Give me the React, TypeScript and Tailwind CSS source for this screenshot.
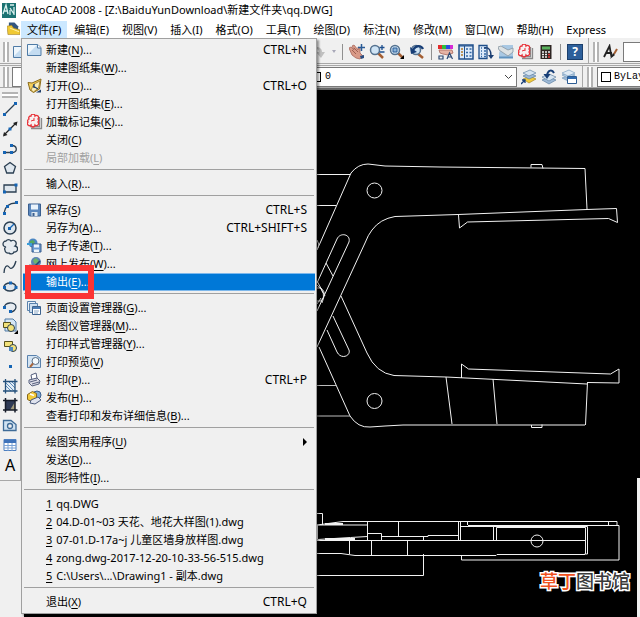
import type { ReactNode } from "react";

interface MenuEntry {
  label: string;
  hotkey?: string;
  tail?: string;
  shortcut?: string;
  icon?: ReactNode;
  disabled?: boolean;
  active?: boolean;
  submenu?: boolean;
}

function Icon({ children }: { children: ReactNode }) {
  return (
    <svg width="16" height="16" viewBox="0 0 16 16" fill="none" className="shrink-0">
      {children}
    </svg>
  );
}

const PageIcon = (
  <Icon>
    <path d="M.5 2.500H10.500l3.500 3v8H.5z" fill="#c4dcf1" stroke="#4f7ba6" />
    <path d="M10.500 2.500v3.500h3.500" fill="#fff" stroke="#4f7ba6" />
    <path d="M1 3h9L1 12z" fill="#eef6fc" />
  </Icon>
);

const OpenIcon = (
  <Icon>
    <path d="M1 4.500l4 .5 9-4-1.500 10-6 3.500L3 12z" fill="#f3cf5b" stroke="#8b6b1c" />
    <path d="M4 12l3-6 6-3-1.500 7-5 4z" fill="#fdf0b8" stroke="#9b7a25" strokeWidth="0.800" />
    <path d="M6 8l5 3M7 6v4" stroke="#1f3f6b" strokeWidth="1.300" />
    <path d="M9 14.500l5-3v3z" fill="#1f3f6b" />
  </Icon>
);

const MarkupIcon = (
  <Icon>
    <path d="M4 14.500h10.500V4M3 12.500h9.500V3" stroke="#8a8a8a" strokeWidth="1.300" />
    <path d="M1 1.500h10.500v10H1z" fill="#f8f0f0" />
    <path d="M2 5a2 2 0 0 1 2-3 2 2 0 0 1 4 0 2 2 0 0 1 3 3 2 2 0 0 1 0 3 2 2 0 0 1-3 3 2 2 0 0 1-4 0 2 2 0 0 1-3-3 2 2 0 0 1 1-3z" stroke="#e8333a" strokeWidth="1.300" />
    <path d="M4 7l3-1M7 4v3" stroke="#e8333a" />
  </Icon>
);

const SaveIcon = (
  <Icon>
    <path d="M1.500 2h12v12h-11l-1-1z" fill="#5b87bd" stroke="#3a5f8f" />
    <path d="M4 2.500h7v5H4z" fill="#eaf3fb" />
    <path d="M4.500 10h6v4h-6z" fill="#dfe8f0" />
    <path d="M5.500 11h2v3h-2z" fill="#3a5f8f" />
  </Icon>
);

const TransmitIcon = (
  <Icon>
    <circle cx="6" cy="5" r="4.500" fill="#4b86c2" />
    <path d="M3 3l3-1 2 2-2 3-3-1z" fill="#55a860" />
    <path d="M5 6h9v8H5z" fill="#6c9bd0" stroke="#3a5f8f" />
    <path d="M7 6.500h5v3H7zM7 11.500h5V14H7z" fill="#eef5fb" />
    <path d="M0 6h4v2" stroke="#3b9ed8" strokeWidth="2" />
  </Icon>
);

const WebIcon = (
  <Icon>
    <circle cx="9" cy="6" r="5" fill="#5b83b5" />
    <path d="M6 4l3-2 3 3-3 3-2-1z" fill="#6db36d" />
    <path d="M2 9h8v5H2z" fill="#dce5ef" stroke="#6a7b91" />
    <path d="M3 10l3 2 7-7" stroke="#27466f" strokeWidth="1.500" />
  </Icon>
);

const PageSetupIcon = (
  <Icon>
    <path d="M.5 1.500h8v9h-8z" fill="#eaf2fa" stroke="#5a82ad" />
    <path d="M2.500 3.500h8v9h-8z" fill="#cddff0" stroke="#5a82ad" />
    <path d="M5.500 6.500h8v8h-8z" fill="#fff" stroke="#3d638f" />
    <path d="M6 7h7v2H6z" fill="#4c7db5" />
    <path d="M7 11h5M7 13h4" stroke="#8aa7c5" />
  </Icon>
);

const PreviewIcon = (
  <Icon>
    <path d="M.5 1.500h9l4 3v9H.5z" fill="#d3e4f3" stroke="#5a82ad" />
    <circle cx="8.500" cy="7" r="3.500" fill="#f5fafd" stroke="#5a6f86" />
    <path d="M6 9.500L3 13" stroke="#a9663b" strokeWidth="2" />
  </Icon>
);

const PrintIcon = (
  <Icon>
    <path d="M4 3l5-2 1 5-5 2z" fill="#fff" stroke="#56607e" />
    <path d="M2 8l8-2 3 3-1 3-7 2-3-3z" fill="#dcdce6" stroke="#56607e" />
    <path d="M3 10l7-2M5 12l7-2" stroke="#56607e" />
  </Icon>
);

const PublishIcon = (
  <Icon>
    <circle cx="10" cy="5" r="4" fill="#7da9d4" stroke="#3a5f8f" />
    <path d="M.5 4.500l5-3 4 2v5l-5 3-4-2z" fill="#f2ca3c" stroke="#86671c" />
    <path d="M4 10l7-3 3 3-6 4-5-1z" fill="#dfe3ee" stroke="#4a5a7c" />
    <path d="M3 4l4 1.500" stroke="#fff" strokeWidth="1.500" />
  </Icon>
);

const fileMenu: MenuEntry[][] = [
  [
    { label: "新建", hotkey: "N", tail: "...", shortcut: "CTRL+N", icon: PageIcon },
    { label: "新建图纸集", hotkey: "W", tail: "..." },
    { label: "打开", hotkey: "O", tail: "...", shortcut: "CTRL+O", icon: OpenIcon },
    { label: "打开图纸集", hotkey: "E", tail: "..." },
    { label: "加载标记集", hotkey: "K", tail: "...", icon: MarkupIcon },
    { label: "关闭", hotkey: "C" },
    { label: "局部加载", hotkey: "L", disabled: true },
  ],
  [{ label: "输入", hotkey: "R", tail: "..." }],
  [
    { label: "保存", hotkey: "S", shortcut: "CTRL+S", icon: SaveIcon },
    { label: "另存为", hotkey: "A", tail: "...", shortcut: "CTRL+SHIFT+S" },
    { label: "电子传递", hotkey: "T", tail: "...", icon: TransmitIcon },
    { label: "网上发布", hotkey: "W", tail: "...", icon: WebIcon },
    { label: "输出", hotkey: "E", tail: "...", active: true },
  ],
  [
    { label: "页面设置管理器", hotkey: "G", tail: "...", icon: PageSetupIcon },
    { label: "绘图仪管理器", hotkey: "M", tail: "..." },
    { label: "打印样式管理器", hotkey: "Y", tail: "..." },
    { label: "打印预览", hotkey: "V", icon: PreviewIcon },
    { label: "打印", hotkey: "P", tail: "...", shortcut: "CTRL+P", icon: PrintIcon },
    { label: "发布", hotkey: "H", tail: "...", icon: PublishIcon },
    { label: "查看打印和发布详细信息", hotkey: "B", tail: "..." },
  ],
  [
    { label: "绘图实用程序", hotkey: "U", submenu: true },
    { label: "发送", hotkey: "D", tail: "..." },
    { label: "图形特性", hotkey: "I", tail: "..." },
  ],
];

const recentFiles = [
  "qq.DWG",
  "04.D-01~03 天花、地花大样图(1).dwg",
  "07-01.D-17a~j 儿童区墙身放样图.dwg",
  "zong.dwg-2017-12-20-10-33-56-515.dwg",
  "C:\\Users\\...\\Drawing1 - 副本.dwg",
];

const menuBar = [
  "文件(F)",
  "编辑(E)",
  "视图(V)",
  "插入(I)",
  "格式(O)",
  "工具(T)",
  "绘图(D)",
  "标注(N)",
  "修改(M)",
  "窗口(W)",
  "帮助(H)",
  "Express",
];

function MenuItem({ item }: { item: MenuEntry }) {
  let color = "text-black";
  if (item.disabled) color = "text-[#a0a0a0]";
  if (item.active) color = "border-y border-[#7db8ec] bg-[#0078d7] text-white";

  return (
    <li className="relative">
      <button
        disabled={item.disabled}
        className={`flex h-[18px] w-full items-center pr-2 pl-1 text-left ${color}`}
      >
        <span className="flex w-[19px] shrink-0">{item.icon}</span>
        <span className="flex-1 whitespace-nowrap">
          {item.label}({<u className="underline-offset-2">{item.hotkey}</u>}){item.tail}
        </span>
        {item.shortcut && <span className="text-xs">{item.shortcut}</span>}
        {item.submenu && (
          <svg width="4" height="8" viewBox="0 0 4 8">
            <path d="M0 0l4 4-4 4z" fill="#000" />
          </svg>
        )}
      </button>
      {item.active && (
        <div className="pointer-events-none absolute -top-2 left-0.5 z-10 h-[34px] w-[69px] border-6 border-[#fb3434]" />
      )}
    </li>
  );
}

function Divider() {
  return (
    <li className="h-2 px-px pt-0.5">
      <div className="h-px bg-[#a0a0a0]" />
    </li>
  );
}

function FileMenu() {
  return (
    <ul className="absolute top-[38px] left-[21px] z-20 w-[296px] border border-[#a0a0a0] bg-[#f0f0f0] px-px py-0.5 shadow-[2px_2px_2px_rgba(0,0,0,0.4)]">
      {fileMenu.map((group, i) => (
        <li key={i}>
          <ul>
            {group.map(item => (
              <MenuItem key={item.label} item={item} />
            ))}
            <Divider />
          </ul>
        </li>
      ))}
      {recentFiles.map((name, i) => (
        <li key={name}>
          <button className="flex h-[18px] w-full items-center gap-1 pl-[23px] whitespace-nowrap">
            <u className="underline-offset-2">{i + 1}</u>
            <span>{name}</span>
          </button>
        </li>
      ))}
      <Divider />
      <MenuItem item={{ label: "退出", hotkey: "X", shortcut: "CTRL+Q" }} />
    </ul>
  );
}

// Standard toolbar

const zoomLens = (
  <>
    <path d="M9 9l5 5" stroke="#a35e32" strokeWidth="2.500" />
    <circle cx="6" cy="6" r="4.500" fill="#cfe4f5" stroke="#55728f" strokeWidth="1.500" />
  </>
);

const viewTools: { name: string; icon: ReactNode }[] = [
  {
    name: "Pan",
    icon: (
      <Icon>
        <path d="M0 4l2-1 3 3-2-4 2-1 4 5 0-3 2 1 0 5 3 3-3 3-4-1-4-3z" fill="#d99a88" stroke="#a8675a" strokeWidth="0.800" />
        <path d="M3 6l4 4M5 4l4 4" stroke="#8d5143" strokeWidth="0.800" />
        <path d="M12.500 0v7M9 3.500h7" stroke="#2a5b96" strokeWidth="1.500" />
        <path d="M11 12l4-1v3l-3 1z" fill="#2a4c80" />
      </Icon>
    ),
  },
  {
    name: "Zoom Realtime",
    icon: (
      <Icon>
        {zoomLens}
        <path d="M13 1v5M10.500 3.500h5M10.500 8h5" stroke="#1d4f8f" strokeWidth="1.300" />
      </Icon>
    ),
  },
  {
    name: "Zoom Window",
    icon: (
      <Icon>
        {zoomLens}
        <path d="M4 4h4v4H4z" fill="#8ab4da" stroke="#2f5f98" />
        <path d="M15 11v4h-4z" fill="#000" />
      </Icon>
    ),
  },
  {
    name: "Zoom Previous",
    icon: (
      <Icon>
        <path d="M8 9l6 5" stroke="#a35e32" strokeWidth="2.500" />
        <circle cx="7" cy="6" r="4.500" fill="#cfe4f5" stroke="#55728f" strokeWidth="1.500" />
        <path d="M14 5C12 1 7 1 4 6" stroke="#173e77" strokeWidth="2.300" />
        <path d="M1 3l1 7 6-2z" fill="#173e77" />
      </Icon>
    ),
  },
];

const paletteTools: { name: string; icon: ReactNode }[] = [
  {
    name: "Properties",
    icon: (
      <Icon>
        <path d="M0 1h4v4H0z" fill="#e22b2b" />
        <path d="M4 1h4v4H4z" fill="#2fbf3a" />
        <path d="M8 1h4v4H8z" fill="#2b4be2" />
        <path d="M12 1h3v4h-3z" fill="#d62bd6" />
        <path d="M1 6l6 0 7 0 1 3-5 2-5-1-3-1z" fill="#e5b3a4" stroke="#a8675a" strokeWidth="0.800" />
        <path d="M1 12h4v3H1zM9 15l2.500-6 3 6M10 13h4" stroke="#2c4a75" strokeWidth="1.200" />
      </Icon>
    ),
  },
  {
    name: "DesignCenter",
    icon: (
      <Icon>
        <path d="M1 1h14v14H1z" fill="#dceafa" stroke="#1f4f8a" strokeWidth="1.500" />
        <path d="M1 2h14M6.500 2v13" stroke="#1f4f8a" />
        <path d="M3 5h2M3 8h2M3 11h2" stroke="#b37b28" strokeWidth="1.500" />
        <path d="M8 5h2M11.500 5h2M8 8.500h2M11.500 8.500h2M8 12h2M11.500 12h2" stroke="#3469a5" strokeWidth="1.500" />
      </Icon>
    ),
  },
  {
    name: "Tool Palettes",
    icon: (
      <Icon>
        <path d="M1 1.500h8v13H1z" fill="#dceafa" stroke="#1f4f8a" strokeWidth="1.300" />
        <path d="M3 4h1M6 4h2M3 7h1M6 7h2M3 10h1M6 10h2M3 12.500h1M6 12.500h2" stroke="#3469a5" strokeWidth="1.500" />
        <path d="M6 4c5-1 7 2 7 8" stroke="#1c3f73" strokeWidth="1.500" />
        <path d="M10 11h6l-3 4z" fill="#1c3f73" />
      </Icon>
    ),
  },
  {
    name: "Sheet Set",
    icon: (
      <Icon>
        <path d="M4 1h11v13H1V9z" fill="#a9c8e3" />
        <path d="M0 3l3-1 7 4 5-2v4l-5 4-9-6z" fill="#dde2e4" stroke="#8795a1" strokeWidth="0.800" />
        <path d="M1 13.500h14" stroke="#5f92bf" strokeWidth="2" />
      </Icon>
    ),
  },
  { name: "Markup", icon: MarkupIcon },
  {
    name: "QuickCalc",
    icon: (
      <Icon>
        <path d="M2.500 1h11v14h-11z" fill="#2d2422" />
        <path d="M4 2.500h8v3H4z" fill="#58b05c" />
        <path d="M4 8h2M7 8h2M10 8h2M4 10.500h2M7 10.500h2M4 13h2M7 13h2" stroke="#f1f1f1" strokeWidth="1.300" />
        <path d="M10 10.500h2M10 13h2" stroke="#df3a3a" strokeWidth="1.300" />
      </Icon>
    ),
  },
];

const layerTools: { name: string; icon: ReactNode }[] = [
  {
    name: "Make Object's Layer Current",
    icon: (
      <Icon>
        <path d="M2 10l7-3 6 3-7 4z" fill="#f0ca3b" stroke="#9c7b19" strokeWidth="0.600" />
        <path d="M2 7l7-3 6 3-7 3z" fill="#9db9d6" stroke="#4f7397" strokeWidth="0.600" />
        <path d="M2 4l7-3 6 3-7 3z" fill="#d6e4f1" stroke="#4f7397" strokeWidth="0.600" />
        <path d="M0 15l4-4M1 11h3v3" stroke="#173e77" strokeWidth="1.300" />
      </Icon>
    ),
  },
  {
    name: "Layer Previous",
    icon: (
      <Icon>
        <path d="M1 11l7-3 7 3-7 4z" fill="#9db9d6" stroke="#4f7397" strokeWidth="0.600" />
        <path d="M1 8l7-3 7 3-7 4z" fill="#d6e4f1" stroke="#4f7397" strokeWidth="0.600" />
        <path d="M13 4C11 0 7 1 6 6" stroke="#173e77" strokeWidth="2" />
        <path d="M2.500 5h7L6 10z" fill="#173e77" />
      </Icon>
    ),
  },
  {
    name: "Layer States Manager",
    icon: (
      <Icon>
        <path d="M1 9l7-3 6 3-7 3z" fill="#9db9d6" stroke="#6b93b8" strokeWidth="0.600" />
        <path d="M1 6l7-3 6 3-7 3z" fill="#b9d0e5" stroke="#6b93b8" strokeWidth="0.600" />
        <path d="M1 4l7-3 6 3-7 3z" fill="#dfeaf4" stroke="#6b93b8" strokeWidth="0.600" />
        <path d="M6.500 7.500h9v7h-9z" fill="#fff" stroke="#2c5c93" />
        <path d="M7 8h8v2H7z" fill="#2f6bb0" />
      </Icon>
    ),
  },
];

// Draw toolbar on the left edge

const ink = "#2b3f52";
const dot = "#1565b5";

const drawTools: { name: string; icon: ReactNode }[] = [
  {
    name: "Line",
    icon: (
      <Icon>
        <path d="M3 13L13 3" stroke={ink} strokeWidth="1.300" />
        <path d="M1 12h3v3H1zM12 1h3v3h-3z" fill={dot} />
      </Icon>
    ),
  },
  {
    name: "Construction Line",
    icon: (
      <Icon>
        <path d="M2 14L14 2" stroke="#222" strokeWidth="1.300" />
        <path d="M1 15.500l1-4.500L5.500 14zM15.500.5l-1 4.500L11 2z" fill="#222" />
        <path d="M6.500 6.500h3v3h-3z" fill={dot} />
      </Icon>
    ),
  },
  {
    name: "Polyline",
    icon: (
      <Icon>
        <path d="M2 11.500h9c5-1 4-7-1-7" stroke={ink} strokeWidth="1.300" />
        <path d="M1 10h3v3H1zM8 10h3v3H8zM8 3h3v3H8z" fill={dot} />
      </Icon>
    ),
  },
  {
    name: "Polygon",
    icon: (
      <Icon>
        <path d="M8 2.500l5.500 4-2.200 6.500H4.700L2.500 6.500z" fill="#dfe7ee" stroke={ink} strokeWidth="1.300" />
      </Icon>
    ),
  },
  {
    name: "Rectangle",
    icon: (
      <Icon>
        <path d="M2 5h12v7H2z" fill="#dfe7ee" stroke={ink} strokeWidth="1.300" />
        <path d="M1 10.500h3v3H1zM12.500 3.500h3v3h-3z" fill={dot} />
      </Icon>
    ),
  },
  {
    name: "Arc",
    icon: (
      <Icon>
        <path d="M2 13C3 7 7 3 14 3" stroke={ink} strokeWidth="1.300" />
        <path d="M1 12h3v3H1zM4 5h3v3H4zM13 1h3v3h-3z" fill={dot} />
      </Icon>
    ),
  },
  {
    name: "Circle",
    icon: (
      <Icon>
        <circle cx="8" cy="8" r="6" fill="#dfe7ee" stroke={ink} strokeWidth="1.500" />
        <path d="M8 8l4-4" stroke={dot} strokeWidth="1.300" />
        <path d="M6 7h3v3H6z" fill={dot} />
      </Icon>
    ),
  },
  {
    name: "Revision Cloud",
    icon: (
      <Icon>
        <path d="M4 8a3 3 0 0 1 0-6 3 3 0 0 1 5 0 3 3 0 0 1 4 5 3 3 0 0 1-1 6 3 3 0 0 1-5 1 3 3 0 0 1-4-3 2 2 0 0 1 1-3z" fill="#e6ebf0" stroke={ink} strokeWidth="1.300" />
      </Icon>
    ),
  },
  {
    name: "Spline",
    icon: (
      <Icon>
        <path d="M2 14C2 8 5 5 7 8s5 1 7-6" stroke={ink} strokeWidth="1.300" />
      </Icon>
    ),
  },
  {
    name: "Ellipse",
    icon: (
      <Icon>
        <ellipse cx="8" cy="8" rx="6" ry="4" fill="#dfe7ee" stroke={ink} strokeWidth="1.500" />
        <path d="M1 7h3v3H1zM12.500 7h3v3h-3zM7 2.500h3v3H7z" fill={dot} />
      </Icon>
    ),
  },
  {
    name: "Ellipse Arc",
    icon: (
      <Icon>
        <path d="M2.500 9C1 3 14 2 14 8c0 3-3 5-6 5" fill="#e6ebf0" stroke={ink} strokeWidth="1.300" />
        <path d="M1 7h3v3H1zM7 11h3v3H7z" fill={dot} />
      </Icon>
    ),
  },
  {
    name: "Insert Block",
    icon: (
      <Icon>
        <path d="M3 1h8l3 3v9H3z" fill="#d5e6f5" stroke="#4f7ba6" />
        <path d="M1.500 4.500h7v5h-7z" fill="#f2e27a" stroke="#55501c" />
        <circle cx="9" cy="10" r="3.500" fill="#f2e27a" stroke={ink} />
        <path d="M16 12v4h-4z" fill="#000" />
      </Icon>
    ),
  },
  {
    name: "Make Block",
    icon: (
      <Icon>
        <path d="M2.500 3.500h8v5h-8z" fill="#f2e27a" stroke="#55501c" />
        <circle cx="11" cy="10" r="3.500" fill="#f2e27a" stroke={ink} />
        <path d="M7 9h4v4H7z" fill="#4e88bf" />
      </Icon>
    ),
  },
  {
    name: "Point",
    icon: (
      <Icon>
        <path d="M7 7h3v3H7z" fill={dot} />
      </Icon>
    ),
  },
  {
    name: "Hatch",
    icon: (
      <Icon>
        <path d="M3 3h10v10H3z" fill="#e3edf6" />
        <path d="M3 7l6 6M3 4l9 9M6 3l7 7M9 3l4 4" stroke="#5d8db9" />
        <path d="M1 3.500h14.500M1 13h14.500M3.500 1v14.500M13 1v14.500" stroke="#24507b" strokeWidth="1.300" />
      </Icon>
    ),
  },
  {
    name: "Gradient",
    icon: (
      <Icon>
        <path d="M3 3h10v10H3z" fill="#2e3a55" />
        <path d="M8 13l5-8v8z" fill="#a39b7b" />
        <path d="M1 3.500h14.500M1 13h14.500M3.500 1v14.500M13 1v14.500" stroke="#151b28" strokeWidth="1.500" />
      </Icon>
    ),
  },
  {
    name: "Region",
    icon: (
      <Icon>
        <path d="M1.500 3.500H9l5 4v6H1.500z" fill="#d0e2f1" stroke="#3e6b97" strokeWidth="1.300" />
        <circle cx="8" cy="9" r="2.500" fill="#f0f0f0" stroke="#3e6b97" strokeWidth="1.300" />
      </Icon>
    ),
  },
  {
    name: "Table",
    icon: (
      <Icon>
        <path d="M2 2.500h12v11H2z" fill="#fff" stroke="#4d7fc0" />
        <path d="M2 3h12v3H2z" fill="#3f73ba" />
        <path d="M2 8.500h12M2 11h12M6 6v8M10 6v8" stroke="#7ba3d6" />
      </Icon>
    ),
  },
];

function Grip() {
  return <div className="h-5 w-1.5 shrink-0 border-x-2 border-[#b4b4b4] bg-white" />;
}

function ToolButton({ name, icon }: { name: string; icon: ReactNode }) {
  return (
    <button aria-label={name} className="flex shrink-0">
      {icon}
    </button>
  );
}

function Separator() {
  return <div className="mx-0.5 h-4 w-px shrink-0 bg-[#909090]" />;
}

function StandardToolbar() {
  return (
    <div className="flex h-[26px] items-stretch overflow-hidden border-b border-[#a8a8a8]">
      <div className="flex w-[312px] shrink-0 items-center gap-1 pt-0.5 pl-[3px]">
        <Grip />
        <ToolButton name="New" icon={PageIcon} />
      </div>
      <div className="flex shrink-0 items-center gap-1 border-r border-[#a8a8a8] pt-0.5 pr-[5px]">
        <svg width="24" height="16" viewBox="0 0 24 16" className="shrink-0">
          <path d="M4 3c4 0 6 2 6 5h3l-4 6-5-6h3c0-2-1-3-3-3z" fill="#c0c0c0" />
          <path d="M20 6h4l-2 3z" fill="#a8a8b8" />
        </svg>
        <Separator />
        {viewTools.map(tool => (
          <ToolButton key={tool.name} {...tool} />
        ))}
        <Separator />
        {paletteTools.map(tool => (
          <ToolButton key={tool.name} {...tool} />
        ))}
        <Separator />
        <button
          aria-label="Help"
          className="size-4 shrink-0 border border-[#1b3f6c] bg-[#2d5f9a] text-center text-xs leading-[14px] font-bold text-white"
        >
          ?
        </button>
      </div>
      <div className="flex flex-1 items-center gap-1 pt-0.5 pl-1">
        <Grip />
        <ToolButton
          name="Text Style"
          icon={
            <Icon>
              <path d="M1 13L6.500 2l2 11M3 9h6" stroke="#222" strokeWidth="1.800" />
              <path d="M14 5l-3 5" stroke="#a35e32" strokeWidth="2" />
              <path d="M10 9l-3 6 5-4z" fill="#222" />
            </Icon>
          }
        />
        <input
          aria-label="Text style"
          defaultValue="Standard"
          className="h-5 w-24 shrink-0 border border-[#7a7a7a] bg-white pl-4"
        />
      </div>
    </div>
  );
}

function LayerToolbar() {
  return (
    <div className="mt-px flex h-[23px] items-stretch overflow-hidden border-y border-[#a8a8a8]">
      <div className="flex w-[230px] shrink-0 items-center gap-[3px] pl-[3px]">
        <Grip />
        <select
          aria-label="Workspace"
          className="h-5 w-[180px] appearance-none border border-[#7a7a7a] bg-white"
        />
      </div>
      <div className="relative flex shrink-0 items-center gap-1 border-r border-[#a8a8a8] pr-[5px] font-[Liberation_Mono,monospace] text-[10px]">
        <select
          aria-label="Layer"
          className="h-5 w-[287px] appearance-none border border-[#7a7a7a] bg-white pl-[94px]"
        >
          <option>0</option>
        </select>
        <div className="pointer-events-none absolute top-1.5 left-[81px] size-2.5 border border-black" />
        <svg width="9" height="6" viewBox="0 0 9 6" className="pointer-events-none absolute top-2 left-[274px]">
          <path d="M1 1l3.500 3.500L8 1" fill="none" stroke="#444" />
        </svg>
        {layerTools.map(tool => (
          <ToolButton key={tool.name} {...tool} />
        ))}
      </div>
      <div className="relative flex flex-1 items-center gap-1 pl-1 font-[Liberation_Mono,monospace] text-[10px]">
        <Grip />
        <select
          aria-label="Color"
          className="h-5 w-36 shrink-0 appearance-none border border-[#7a7a7a] bg-white pl-4"
        >
          <option>ByLayer</option>
        </select>
        <div className="pointer-events-none absolute top-1.5 left-[18px] size-2.5 border border-black" />
      </div>
    </div>
  );
}

function DrawToolbar() {
  return (
    <div className="h-[393px] w-[21px] shrink-0 border-r border-b border-[#a8a8a8] bg-[#f0f0f0] px-0.5 pt-1">
      <div className="h-1.5 border-y-2 border-[#b4b4b4] bg-white" />
      <div className="mt-[3px] flex h-[372px] flex-col items-center justify-between">
        {drawTools.map(tool => (
          <ToolButton key={tool.name} {...tool} />
        ))}
        <button aria-label="Multiline Text" className="h-4 text-[16px] leading-4 text-black">
          A
        </button>
      </div>
    </div>
  );
}

function Drawing() {
  return (
    <svg width="613" height="527" viewBox="24 90 613 527" fill="none" stroke="#f2f2f2" className="block max-w-none">
      {/* upper arm */}
      <path d="M317 250L351 173Q358 164 368 164L385 166L440 167L585 168.500L587 209" />
      <path d="M531 167.500v-3h11l1 4" />
      <circle cx="374.500" cy="190.500" r="7.500" />
      <path d="M587 209.500L458 214.500L395 216.500Q380 219 372 230Q368 235 365 243L317 347" />
      <path d="M458.500 215l1 13 8-6 141-3.500 9 4-1-14-30 1" />
      <path d="M317 174.500h33M317 205.500h19" />
      <path d="M317 283L337 239C340 232 351 234 349 242L317 311" />
      <path d="M326 263l7 13M317 281l8 15" />

      {/* hinge */}
      <path d="M317 240q3 4 1 8M317 288h4q7 6 0 13h-4M317 285q10 8 5 18M317 304l4-6" strokeWidth="0.800" />

      {/* lower arm */}
      <path d="M341 296L367 353Q376 373 394 375.500L446 377L587 384" />
      <path d="M319 347L350 416Q358 428 370 427L385 426L403 425L585 425" />
      <path d="M327 330l10 22C341 360 351 356 349 350L333 316" />
      <circle cx="374.500" cy="401" r="7.500" />
      <path d="M531.500 425v2.500h10.500v-3" />
      <path d="M446 377l6 47M493 379l4 45M587.500 382l-2 43" />
      <path d="M461.500 378v-14l7 5 142 5 8.500-5v14l-31-.500" />
      <path d="M317 385.500h19M317 416h33" stroke="#bdbdbd" />

      {/* side view */}
      <path d="M317 513.500h5.500V525M317 525l26-3.500h274v4M317 525h50M468 525.500h151V560H461.500v-5" />
      <path d="M317.500 525v14.500l33-2 17-1M367.500 522v18M367.500 533.500h14v7M381 536.500h47v-1h30M398.500 522v14" />
      <path d="M458.500 522v18.500M460.500 522v18.500M467.500 521v4M608.500 521v4M423.500 536v4" />
      <path d="M317 540.500h268M349.500 540v14M371.500 541v14M407.500 541v14" />
      <path d="M317 553.500h24l14 2h141l1-1h88M423.500 554v21.500H317" />
      <path d="M461 526.500h126.500V554h-3M493.500 526v14M496.500 540v-12.500h89V554" />
      <circle cx="537" cy="541" r="6" />
      <path d="M325 524h18M325 539h30" strokeWidth="2" />
    </svg>
  );
}

export default function App() {
  return (
    <div className="relative overflow-hidden bg-[#f0f0f0] font-[Noto_Sans,Noto_Sans_CJK_SC,sans-serif] text-[11px] text-black">
      <header className="bg-white">
        <div className="flex h-[21px] items-center gap-[5px] pl-0.5">
          <svg width="14" height="15" viewBox="0 0 14 15" className="shrink-0">
            <path d="M0 0h14v15H0z" fill="#1b7272" />
            <path d="M1 11L4 2l2 9M2 8h4M8 2h4M8 5l4 6M12 4v8M8 7v5" fill="none" stroke="#d9f0ee" strokeWidth="1.300" />
          </svg>
          <h1 className="whitespace-nowrap">
            AutoCAD 2008 - [Z:\BaiduYunDownload\新建文件夹\qq.DWG]
          </h1>
        </div>
        <nav className="flex h-[17px] items-stretch gap-px pl-[7px]">
          <svg width="13" height="15" viewBox="0 0 14 15" className="shrink-0">
            <path d="M2 1h6l4 4v5H2z" fill="#33567f" />
            <path d="M0 5l5-1 2 3 7 2v5H1z" fill="#f0c933" stroke="#9b7a25" strokeWidth="0.600" />
            <path d="M3 7l10 4" stroke="#fff3b0" />
          </svg>
          {menuBar.map((label, i) => (
            <button
              key={label}
              className={`px-1.5 leading-4 whitespace-nowrap ${i === 0 ? "bg-[#cce8ff]" : ""}`}
            >
              {label}
            </button>
          ))}
        </nav>
      </header>

      <StandardToolbar />
      <LayerToolbar />

      <main className="flex items-stretch">
        <DrawToolbar />
        <div className="relative ml-[3px] flex-1 overflow-hidden border-t-2 border-[#666] bg-black">
          <Drawing />
          <p className="absolute right-2.5 bottom-6 text-[18px] leading-6 font-medium text-[#3a3a3a] [-webkit-text-stroke:3px_white] [paint-order:stroke]">
            <span className="text-[#f0521e]">草丁</span>图书馆
          </p>
          <div className="absolute right-0 bottom-0 h-[139px] w-[3px] bg-[#f0f0f0]" />
        </div>
      </main>

      <FileMenu />
    </div>
  );
}
